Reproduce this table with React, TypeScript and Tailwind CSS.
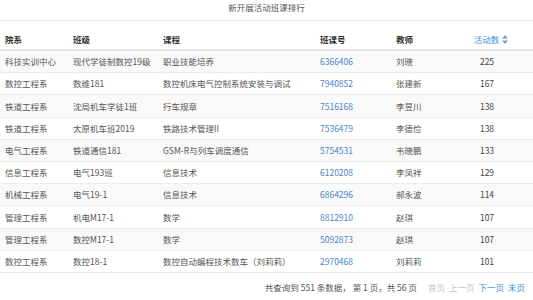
import React from "react";

const rows = [
  ["科技实训中心", "现代学徒制数控19级", "职业技能培养", "6366406", "刘晓", "225"],
  ["数控工程系", "数维181", "数控机床电气控制系统安装与调试", "7940852", "张建新", "167"],
  ["铁道工程系", "沈局机车学徒1班", "行车规章", "7516168", "李昱川", "138"],
  ["铁道工程系", "太原机车班2019", "铁路技术管理II", "7536479", "李德俭", "138"],
  ["电气工程系", "铁道通信181", "GSM-R与列车调度通信", "5754531", "韦晓鹏", "133"],
  ["信息工程系", "电气193班", "信息技术", "6120208", "李凤祥", "129"],
  ["机械工程系", "电气19-1", "信息技术", "6864296", "郝永波", "114"],
  ["管理工程系", "机电M17-1", "数学", "8812910", "赵琪", "107"],
  ["管理工程系", "数控M17-1", "数学", "5092873", "赵琪", "107"],
  ["数控工程系", "数控18-1", "数控自动编程技术数车（刘莉莉）", "2970468", "刘莉莉", "101"],
];

const cols = "grid grid-cols-[73px_90px_157px_76px_70px_1fr]";

function SortIcon() {
  return (
    <svg width="6" height="9" viewBox="0 0 6 9" className="ml-[3px]">
      <path d="M3 0 L6 3.6 L0 3.6 Z" fill="#7a9ccc" />
      <path d="M3 9 L6 5.4 L0 5.4 Z" fill="#7a9ccc" />
    </svg>
  );
}

export default function App() {
  return (
    <div
      className="w-[533px] h-[300px] bg-white text-[8.5px] text-[#555] overflow-hidden"
      style={{ fontFamily: '"Noto Sans CJK SC", "Noto Sans", sans-serif' }}
    >
      <div className="h-[21px] border-b border-[#e8e8e8] flex justify-center pt-[1px] text-[#555]">
        新开展活动班课排行
      </div>
      <div className="mt-[9px]">
        <div className={`${cols} h-[21px] items-center border-b-2 border-[#e4e4e4] font-bold text-[#333]`}>
          <span className="pl-[5px]">院系</span>
          <span>班级</span>
          <span>课程</span>
          <span>班课号</span>
          <span>教师</span>
          <span className="flex items-center justify-center pr-[17px] font-normal text-[#3b8fe0]">
            活动数
            <SortIcon />
          </span>
        </div>
        {rows.map((r, i) => (
          <div
            key={i}
            className={`${cols} h-[22.2px] items-center border-b border-[#ececec] ${i % 2 === 0 ? "bg-[#f9f9f9]" : "bg-white"}`}
          >
            <span className="pl-[5px]">{r[0]}</span>
            <span>{r[1]}</span>
            <span>{r[2]}</span>
            <span className="text-[#4a86c8]">{r[3]}</span>
            <span>{r[4]}</span>
            <span className="text-center pr-[25px] text-[#444]">{r[5]}</span>
          </div>
        ))}
      </div>
      <div className="flex justify-end items-center mt-[8px] pr-[8px] gap-[11px]">
        <span>共查询到 551 条数据， 第 1 页，共 56 页</span>
        <span className="flex gap-[4px]">
          <span className="text-[#c4c4c4]">首页</span>
          <span className="text-[#c4c4c4]">上一页</span>
          <span className="text-[#3b8fe0]">下一页</span>
          <span className="text-[#3b8fe0]">末页</span>
        </span>
      </div>
    </div>
  );
}
